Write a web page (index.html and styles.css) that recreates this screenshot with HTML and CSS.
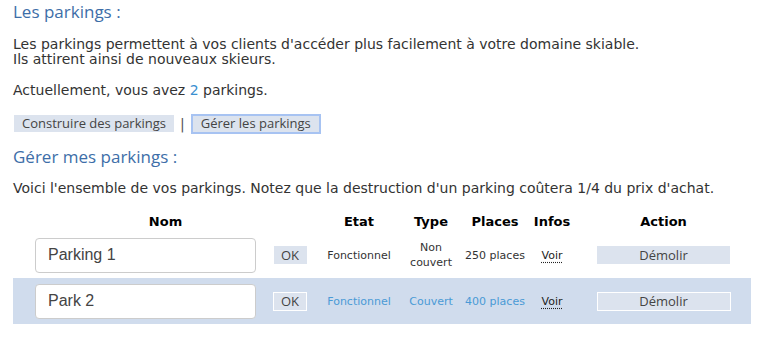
FILE: index.html
```html
<!DOCTYPE html>
<html lang="fr">
<head>
    <meta charset="UTF-8">
    <title>Parkings</title>
    <link rel="stylesheet" href="styles.css">
</head>
<body>
<div class="page">
    <h2>Les parkings :</h2>
    <p class="intro">Les parkings permettent à vos clients d'accéder plus facilement à votre domaine skiable.<br>
        Ils attirent ainsi de nouveaux skieurs.</p>
    <p class="count">Actuellement, vous avez <span class="num">2</span> parkings.</p>
    <div class="tabs">
        <button class="tab">Construire des parkings</button>
        <span class="sep">|</span>
        <button class="tab active">Gérer les parkings</button>
    </div>

    <h2>Gérer mes parkings :</h2>
    <p class="note">Voici l'ensemble de vos parkings. Notez que la destruction d'un parking coûtera 1/4 du prix d'achat.</p>

    <table class="list">
        <colgroup>
            <col style="width:249px">
            <col style="width:56px">
            <col style="width:82px">
            <col style="width:62px">
            <col style="width:66px">
            <col style="width:48px">
            <col style="width:175px">
        </colgroup>
        <thead>
        <tr>
            <th colspan="2">Nom</th>
            <th>Etat</th>
            <th>Type</th>
            <th>Places</th>
            <th>Infos</th>
            <th>Action</th>
        </tr>
        </thead>
        <tbody>
        <tr>
            <td class="name"><input type="text" value="Parking 1"></td>
            <td><button class="btn ok">OK</button></td>
            <td>Fonctionnel</td>
            <td>Non<br>couvert</td>
            <td>250 places</td>
            <td><a class="info">Voir</a></td>
            <td><button class="btn demolish">Démolir</button></td>
        </tr>
        <tr class="alt">
            <td class="name"><input type="text" value="Park 2"></td>
            <td><button class="btn ok">OK</button></td>
            <td>Fonctionnel</td>
            <td>Couvert</td>
            <td>400 places</td>
            <td><a class="info">Voir</a></td>
            <td><button class="btn demolish">Démolir</button></td>
        </tr>
        </tbody>
    </table>
</div>
</body>
</html>
```

FILE: styles.css
```css
body, html {
    margin: 0;
    background: white;
}
.page {
    padding: 0 13px;
    font-family: "DejaVu Sans", Verdana, sans-serif;
    font-size: 14px;
    color: #333;
}
h2 {
    margin: 0;
    font-family: "Open Sans", sans-serif;
    font-weight: normal;
    font-size: 17px;
    color: #3d6ea8;
    line-height: 24px;
}
p {
    margin: 0;
    line-height: 15px;
}
.intro {
    margin-top: 13px;
}
.count {
    margin-top: 16px;
}
.note {
    margin-top: 12px;
}
.num {
    color: #3a8fd0;
}
.tabs {
    margin-top: 16px;
    margin-bottom: 12px;
    display: flex;
    align-items: center;
    height: 19px;
}
.tab {
    font-family: "Open Sans", sans-serif;
    font-size: 13px;
    color: #444;
    background: #dce3ee;
    border: 1px solid #dce3ee;
    padding: 0 7px;
    height: 17px;
    line-height: 15px;
    margin-left: 1px;
}
.tab.active {
    border: 2px solid #a7c3f2;
    height: 20px;
    padding: 0 8px;
}
.sep {
    margin: 0 5px 0 6px;
    color: #555;
}
.list {
    margin-top: 14px;
    border-collapse: collapse;
    table-layout: fixed;
    width: 738px;
}
.list th {
    font-size: 13px;
    color: #000;
    height: 22px;
    padding: 0;
}
.list td {
    text-align: center;
    font-size: 11px;
    line-height: 15px;
    height: 46px;
    padding: 0;
}
.list td.name {
    text-align: left;
    padding-left: 22px;
}
.list input {
    box-sizing: border-box;
    width: 221px;
    height: 35px;
    border: 1px solid #ccc;
    border-radius: 4px;
    padding: 0 12px;
    font-family: "Liberation Sans", Arial, sans-serif;
    font-size: 16px;
    color: #444;
    background: white;
}
.list tr.alt td {
    background: #d0dced;
    color: #4a9ad6;
}
.btn {
    font-family: "Open Sans", sans-serif;
    color: #444;
    background: #dce3ee;
    border: 1px solid #dce3ee;
    font-size: 13px;
    line-height: 15px;
    padding: 0;
    height: 18px;
}
.btn.ok {
    width: 33px;
}
.btn.demolish {
    width: 133px;
}
.alt .btn {
    border: 1px solid white;
    height: 19px;
}
.alt .btn.ok {
    width: 34px;
}
.alt .btn.demolish {
    width: 134px;
}
.info {
    color: #222;
    text-decoration: underline dotted;
    text-underline-offset: 3px;
}
```
